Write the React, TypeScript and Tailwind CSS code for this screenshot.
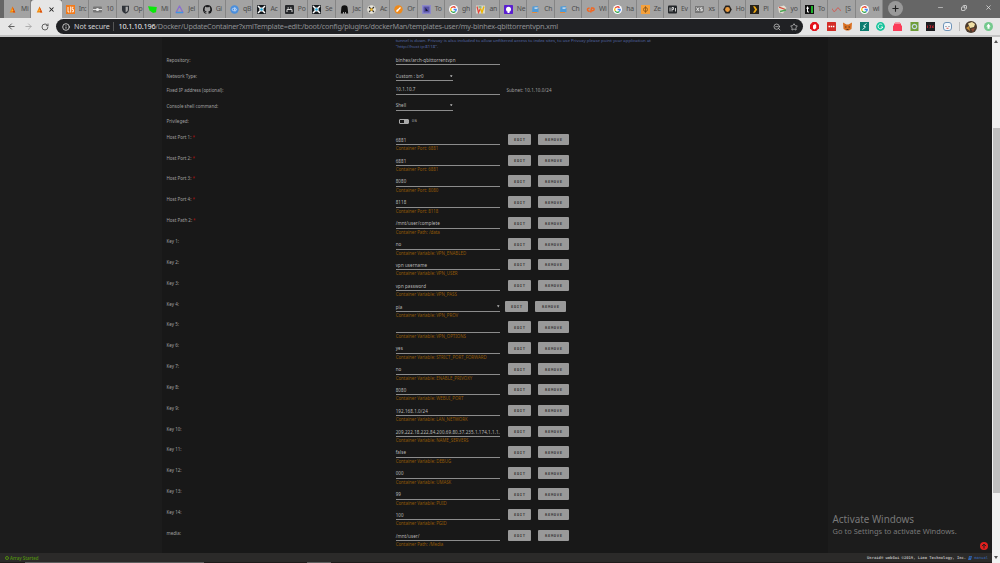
import type { ReactNode } from "react";
import { ArrowLeft, ArrowRight, RotateCw, Info, ZoomOut, Star, Plus, Minus, Copy, X } from "lucide-react";

type Tab = { title: string; icon: ReactNode; active?: boolean };

type Field = {
  label: string;
  value: string;
  hint: string;
  required?: boolean;
  select?: boolean;
};

const flame = (
  <svg viewBox="0 0 9 9" className="size-full">
    <path d="M4.5 1.500 7.300 7.500H1.700z" fill="#f28a12" />
    <path d="M4.5 1.500 7.300 7.500H5.2z" fill="#d9480f" />
    <path d="M3.300 6h2.400L4.5 4.200z" fill="#ffb52e" />
  </svg>
);

const google = (
  <svg viewBox="0 0 9 9" className="size-full">
    <circle cx="4.5" cy="4.5" r="4.5" fill="#fff" />
    <g fill="none" strokeWidth="1.3">
      <path d="M2.2 3A2.7 2.7 0 0 1 6.5 2.7" stroke="#ea4335" />
      <path d="M2.2 3a2.7 2.7 0 0 0 0 3" stroke="#fbbc05" />
      <path d="M2.2 6a2.7 2.7 0 0 0 4.2.5" stroke="#34a853" />
      <path d="M6.4 6.5a2.7 2.7 0 0 0 .8-2H4.6" stroke="#4285f4" />
    </g>
  </svg>
);

const crosshair = (
  <svg viewBox="0 0 9 9" className="size-full">
    <rect width="9" height="9" rx="1" fill="#15191d" />
    <path d="M1 1l7 7M8 1 1 8" stroke="#fff" strokeWidth="1.5" />
    <circle cx="4.5" cy="4.5" r="2.1" fill="#fff" />
    <circle cx="4.5" cy="4.5" r="1.3" fill="#22a7d8" />
  </svg>
);

const forum = (
  <svg viewBox="0 0 9 9" className="size-full">
    <path d="M1.5 1.5 7.500 1 5.8 3H7.500v4L1 7.500z" fill="#4f9bd8" />
    <path d="M3.5 2.5h3v1.2h-3z" fill="#e8eef5" />
    <path d="M1 7.500h5" stroke="#e58b3c" />
  </svg>
);

const tabs: Tab[] = [
  { title: "Mi", icon: flame },
  { title: "", icon: flame, active: true },
  {
    title: "In:",
    icon: (
      <svg viewBox="0 0 9 9" className="size-full">
        <rect width="9" height="9" fill="#f27a1a" />
        <path d="M2 2v5h1.4M4.7 1.5v6M7.4 2.3H6.2v2.2h1.2v2.3H6" stroke="#fff" strokeWidth=".9" fill="none" />
      </svg>
    ),
  },
  {
    title: "10",
    icon: (
      <svg viewBox="0 0 9 9" className="size-full">
        <rect y="1.5" width="9" height="6" rx="1" fill="#777" />
        <path d="M0 4.5h9" stroke="#ddd" />
        <circle cx="4.5" cy="4.5" r="1.6" fill="#eee" />
      </svg>
    ),
  },
  {
    title: "Op",
    icon: (
      <svg viewBox="0 0 9 9" className="size-full">
        <path d="M1 .7h7v4c0 2-1.7 3.2-3.5 4C2.700 7.900 1 6.700 1 4.700z" fill="#30343a" />
        <path d="M4.600 1.800h2.300v3c0 1-1 1.900-2.300 2.500z" fill="#aaa" />
      </svg>
    ),
  },
  {
    title: "Mi",
    icon: (
      <svg viewBox="0 0 9 9" className="size-full">
        <path d="M0 1.300 8.800 2 8 7.300 5 8 1.600 5.500z" fill="#0ae80a" />
      </svg>
    ),
  },
  {
    title: "Jel",
    icon: (
      <svg viewBox="0 0 9 9" className="size-full" fill="none" strokeWidth="1.300">
        <path d="M4.500 1 1 7.500h7z" stroke="#8a6fd0" strokeLinejoin="round" />
        <path d="M1 7.500h7" stroke="#3d9be0" />
      </svg>
    ),
  },
  {
    title: "Gi",
    icon: (
      <svg viewBox="0 0 16 16" className="size-full">
        <path
          d="M8 0a8 8 0 0 0-2.500 15.600c.4 0 .5-.2.500-.4v-1.500c-2.200.5-2.700-1-2.700-1-.4-.9-.9-1.200-.9-1.200-.7-.5 0-.5 0-.5.8.1 1.300.9 1.300.9.700 1.200 1.900.9 2.300.7.100-.5.300-.9.500-1.100-1.800-.2-3.700-.9-3.700-4 0-.9.300-1.600.8-2.100 0-.2-.3-1 .1-2.100 0 0 .7-.2 2.200.8a7.700 7.700 0 0 1 4 0c1.500-1 2.200-.8 2.200-.8.4 1.100.2 1.900.1 2.100.5.5.8 1.200.8 2.100 0 3.100-1.900 3.800-3.700 4 .3.300.6.800.6 1.500v2.200c0 .2.100.5.600.4A8 8 0 0 0 8 0z"
          fill="#1b1b1d"
        />
      </svg>
    ),
  },
  {
    title: "qB",
    icon: (
      <svg viewBox="0 0 9 9" className="size-full">
        <circle cx="4.500" cy="4.500" r="4.200" fill="#4b8fdc" />
        <circle cx="3.500" cy="4.500" r="1.200" fill="none" stroke="#dceaff" strokeWidth=".7" />
        <path d="M4.800 2v4.500M5 3.700c2-.8 2 2.500 0 2" stroke="#dceaff" strokeWidth=".7" fill="none" />
      </svg>
    ),
  },
  { title: "Ac", icon: crosshair },
  {
    title: "Po",
    icon: (
      <svg viewBox="0 0 9 9" className="size-full">
        <rect width="9" height="9" rx="1" fill="#26282b" />
        <path d="M2 7V4.500h5V7M2.500 3h1.500M5 3h1.500" stroke="#d8d8d8" fill="none" />
      </svg>
    ),
  },
  { title: "Se", icon: crosshair },
  {
    title: "Jac",
    icon: (
      <svg viewBox="0 0 9 9" className="size-full">
        <path d="M.8 8.500 1.300 3.500a3 3 0 0 1 6.400 0l.5 5H6V7H5v1.500H4V7H3v1.500z" fill="#111" />
      </svg>
    ),
  },
  {
    title: "Ac",
    icon: (
      <svg viewBox="0 0 9 9" className="size-full">
        <circle cx="4.500" cy="4.500" r="4.300" fill="#e8e5da" />
        <path d="M2 2l5 5M7 2 2 7" stroke="#333" strokeWidth="1.100" />
        <circle cx="4.500" cy="4.500" r="1.500" fill="#e3b23a" />
      </svg>
    ),
  },
  {
    title: "Or",
    icon: (
      <svg viewBox="0 0 9 9" className="size-full">
        <circle cx="4.500" cy="4.500" r="4.200" fill="#ee8a1c" />
        <path d="M2.500 6.500 6.500 2.500" stroke="#fff" strokeWidth="1.200" />
        <circle cx="3.500" cy="5.500" r=".9" fill="#fff" />
      </svg>
    ),
  },
  {
    title: "To",
    icon: (
      <svg viewBox="0 0 9 9" className="size-full">
        <rect width="9" height="9" fill="#8d89c8" />
        <rect x="1.500" y="1.500" width="6" height="6" fill="#5652a6" />
        <path d="M3.500 2.500 6 6H3.500z" fill="#17152e" />
      </svg>
    ),
  },
  { title: "gh", icon: google },
  {
    title: "an",
    icon: (
      <svg viewBox="0 0 9 9" className="size-full">
        <rect y=".5" width="9" height="8" fill="#d9d8cf" />
        <path d="M1 1.500 2.500 7.500 4.500 3.500" stroke="#e3443a" fill="none" strokeWidth="1.200" />
        <path d="M4.500 3.500 6 7.500 8 1.500" stroke="#edb600" fill="none" strokeWidth="1.400" />
        <path d="M2.500 2h3" stroke="#3a9a57" />
      </svg>
    ),
  },
  {
    title: "Ne",
    icon: (
      <svg viewBox="0 0 9 9" className="size-full">
        <rect width="9" height="9" rx=".8" fill="#5a1fd0" />
        <circle cx="4.500" cy="4.300" r="2.500" fill="#fff" />
        <path d="M3.500 5.500h2V8h-2z" fill="#fff" />
      </svg>
    ),
  },
  { title: "Ch", icon: forum },
  { title: "Ch", icon: forum },
  {
    title: "Wi",
    icon: (
      <svg viewBox="0 0 9 9" className="size-full" fill="none" stroke="#f26722" strokeWidth="1.500">
        <path d="M3.600 3.300a1.500 1.500 0 1 0 0 2.700M4.600 7.500l1-4.500h1.200a1.300 1.300 0 0 1 0 2.700H5.500" />
      </svg>
    ),
  },
  { title: "ha", icon: google },
  {
    title: "Ze",
    icon: (
      <svg viewBox="0 0 9 9" className="size-full">
        <rect width="9" height="9" fill="#f5a13c" />
        <circle cx="4.500" cy="4.500" r="2" fill="none" stroke="#8a5413" strokeWidth=".8" />
        <path d="M4.500 1.200v6.600" stroke="#8a5413" strokeWidth=".8" />
      </svg>
    ),
  },
  {
    title: "Ev",
    icon: (
      <svg viewBox="0 0 9 9" className="size-full">
        <rect y=".5" width="9" height="8" rx="1" fill="#24272a" />
        <path d="M2 2.500v4M4 6.500v-4h1.500v2H4M7.500 3v3.500" stroke="#ddd" strokeWidth=".9" fill="none" />
      </svg>
    ),
  },
  {
    title: "xs",
    icon: (
      <svg viewBox="0 0 9 9" className="size-full">
        <path d="M0 1h9v5.500L7 8H0z" fill="#777" />
        <path d="M1.500 2.500 4 6M4 2.500 1.500 6M7.300 2.800H5.600v1.400h1.700v1.500H5.400" stroke="#eee" strokeWidth=".9" fill="none" />
      </svg>
    ),
  },
  {
    title: "Ho",
    icon: (
      <svg viewBox="0 0 9 9" className="size-full">
        <path d="M2.500.5h4L8.800 4.500l-2.300 4h-4l-2.300-4z" fill="#25211d" />
        <circle cx="4.500" cy="4.500" r="2.400" fill="#e99a3e" />
      </svg>
    ),
  },
  {
    title: "Pl",
    icon: (
      <svg viewBox="0 0 9 9" className="size-full">
        <rect width="9" height="9" fill="#26221c" />
        <path d="M3 1.200h2L7.200 4.500 5 7.800H3l2-3.300z" fill="#eba712" />
      </svg>
    ),
  },
  {
    title: "yo",
    icon: (
      <svg viewBox="0 0 9 9" className="size-full">
        <path d="M0 2 6 .5 8.500 3 5 8.500 1 7.500z" fill="#e2dfd2" />
        <path d="M1 2.200 7.500 4.500" stroke="#d94a3b" strokeWidth="1.300" />
        <path d="M2 6.500 8 5" stroke="#4da657" strokeWidth="1.300" />
      </svg>
    ),
  },
  {
    title: "To",
    icon: (
      <svg viewBox="0 0 9 9" className="size-full">
        <rect width="9" height="9" fill="#101010" />
        <path d="M6 1h2v7H6z" fill="#1fb32b" />
        <path d="M2.500 1.500v5.500h1.500M1.300 3.200H4" stroke="#fff" fill="none" />
      </svg>
    ),
  },
  {
    title: "[S",
    icon: (
      <svg viewBox="0 0 9 9" className="size-full" fill="none" stroke="#d9534a">
        <path d="M0 3.500c1.200 3.500 3.200 3.500 4 1.500s2.500-3.500 4.500.8" />
      </svg>
    ),
  },
  { title: "wi", icon: google },
];

const fields: Field[] = [
  { label: "Host Port 1:", value: "6881", hint: "Container Port: 6881", required: true },
  { label: "Host Port 2:", value: "6881", hint: "Container Port: 6881", required: true },
  { label: "Host Port 3:", value: "8080", hint: "Container Port: 8080", required: true },
  { label: "Host Port 4:", value: "8118", hint: "Container Port: 8118", required: true },
  { label: "Host Path 2:", value: "/mnt/user/complete", hint: "Container Path: /data", required: true },
  { label: "Key 1:", value: "no", hint: "Container Variable: VPN_ENABLED" },
  { label: "Key 2:", value: "vpn username", hint: "Container Variable: VPN_USER" },
  { label: "Key 3:", value: "vpn password", hint: "Container Variable: VPN_PASS" },
  { label: "Key 4:", value: "pia", hint: "Container Variable: VPN_PROV", select: true },
  { label: "Key 5:", value: "", hint: "Container Variable: VPN_OPTIONS" },
  { label: "Key 6:", value: "yes", hint: "Container Variable: STRICT_PORT_FORWARD" },
  { label: "Key 7:", value: "no", hint: "Container Variable: ENABLE_PRIVOXY" },
  { label: "Key 8:", value: "8080", hint: "Container Variable: WEBUI_PORT" },
  { label: "Key 9:", value: "192.168.1.0/24", hint: "Container Variable: LAN_NETWORK" },
  { label: "Key 10:", value: "209.222.18.222,84.200.69.80,37.235.1.174,1.1.1.", hint: "Container Variable: NAME_SERVERS" },
  { label: "Key 11:", value: "false", hint: "Container Variable: DEBUG" },
  { label: "Key 12:", value: "000", hint: "Container Variable: UMASK" },
  { label: "Key 13:", value: "99", hint: "Container Variable: PUID" },
  { label: "Key 14:", value: "100", hint: "Container Variable: PGID" },
  { label: "media:", value: "/mnt/user/", hint: "Container Path: /Media" },
];

function TabStrip() {
  return (
    <div className="flex h-[18px] bg-[#666] pl-1">
      <div className="flex w-[879px]">
        {tabs.map((tab, i) => (
          <div
            key={i}
            className={
              tab.active
                ? "flex min-w-0 flex-1 items-center rounded-t-[3px] bg-[#e6e6e6] pl-1 pr-1"
                : "flex min-w-0 flex-1 items-center border-r border-[#858585] bg-[#a3a3a3] pl-1"
            }
          >
            <span className="size-[9px] shrink-0">{tab.icon}</span>
            {tab.active ? (
              <X className="ml-[4px] size-[7px] shrink-0 text-[#222]" strokeWidth={3.5} />
            ) : (
              <span className="ml-1 whitespace-nowrap text-[6.800px] leading-[10px] tracking-[-0.200px] text-[#4c4c4c]">
                {tab.title}
              </span>
            )}
          </div>
        ))}
      </div>
      <span className="ml-[5px] mt-[1px] flex size-[15px] items-center justify-center rounded-full bg-[#999]">
        <Plus className="size-[9px] text-[#222]" strokeWidth={3} />
      </span>
      <div className="ml-auto mr-[8.500px] flex h-[15px] items-center gap-[17.500px] text-[#e4e4e4]">
        <Minus className="size-[7px]" />
        <Copy className="size-[6px] -scale-x-100" strokeWidth={3} />
        <X className="size-[7px]" strokeWidth={2.5} />
      </div>
    </div>
  );
}

function Extensions() {
  return (
    <div className="ml-[7px] flex items-center gap-[7.600px]">
      <svg viewBox="0 0 9 9" className="size-[9px]">
        <path d="M2.700 0h3.600L9 2.700v3.600L6.300 9H2.700L0 6.300V2.700z" fill="#e3131b" />
        <path d="M3 3.500v3l1.500 1L6.200 6V3L5 2z" fill="#fff" />
      </svg>
      <svg viewBox="0 0 9 9" className="size-[9px]">
        <rect width="9" height="9" rx=".6" fill="#d32d27" />
        <path d="M1.500 4.500h6" stroke="#fff" strokeWidth="1.500" strokeDasharray="1.500 .7" />
      </svg>
      <svg viewBox="0 0 9 9" className="size-[9px]">
        <path d="M0 .5 3.500 2.500h2L9 .5 8.500 7 6 8.500H3L.5 7z" fill="#d96f20" />
        <path d="M2 5h1.500M5.500 5H7M3.500 7.500h2" stroke="#4a3020" strokeWidth=".9" />
      </svg>
      <svg viewBox="0 0 9 9" className="size-[9px]">
        <rect width="9" height="9" fill="#0c7d70" />
        <path d="M6.500 1.500 3.500 4l2 1-3 2.500" stroke="#d7f5ef" fill="none" />
      </svg>
      <svg viewBox="0 0 9 9" className="size-[9px]">
        <circle cx="4.500" cy="4.500" r="4.400" fill="#15c39a" />
        <path d="M6.300 2.800a2.400 2.400 0 1 0 .5 2.200H4.800" stroke="#fff" strokeWidth=".9" fill="none" />
      </svg>
      <svg viewBox="0 0 9 9" className="size-[9px]">
        <path d="M1 1.500h7v2H9V9H0V3.500h1z" fill="#fb3b57" />
        <path d="M2 .8h5" stroke="#fb8191" />
      </svg>
      <svg viewBox="0 0 9 9" className="size-[9px]">
        <rect x=".5" width="8" height="9" fill="#6f9d38" />
        <circle cx="4.500" cy="4.500" r="2.200" fill="none" stroke="#c4d8e4" strokeWidth="1.200" />
      </svg>
      <svg viewBox="0 0 9 9" className="size-[9px]">
        <rect width="9" height="9" fill="#1c1c1f" />
        <path d="M1.500 3.500v2.500M3.500 3.500h1v2.300h-1M6 3.500l1.500 2.500M7.500 3.500 6 6" stroke="#c4242c" strokeWidth=".9" fill="none" />
      </svg>
      <svg viewBox="0 0 9 9" className="size-[9px]">
        <rect x=".5" y=".5" width="8" height="8" rx="2.500" fill="#f3f6fa" stroke="#6d93b8" />
        <circle cx="3" cy="4.500" r=".5" fill="#345" />
        <circle cx="6" cy="4.500" r=".5" fill="#345" />
        <path d="M3.500 6.300h2" stroke="#e2574c" />
      </svg>
      <span className="h-[9px] w-px bg-[#bcbcbc]" />
      <svg viewBox="0 0 12 12" className="ml-[-2.500px] size-3">
        <circle cx="6" cy="6" r="6" fill="#4b3a2c" />
        <path d="M3 2.500 7 1l3 2-1 3-4 1z" fill="#f0dfa5" />
        <path d="M1 7l3-2 1 5z" fill="#c8903b" />
        <path d="M6 8l4-1-2 4z" fill="#8f4834" />
      </svg>
      <svg viewBox="0 0 9 9" className="ml-[-1px] size-[9px]">
        <circle cx="4.500" cy="4.500" r="4.500" fill="#74c98d" />
        <path d="M4.500 1.800 6.700 4.500H5.500v2.300h-2V4.500H2.300z" fill="#fff" />
      </svg>
    </div>
  );
}

function AddressBar() {
  return (
    <div className="flex h-[19px] items-center border-b-2 border-[#c4c4c4] bg-[#e6e6e6] pl-[7px]">
      <div className="flex w-[49px] items-center gap-[8px] text-[#555]">
        <ArrowLeft className="size-[9px]" strokeWidth={2.500} />
        <ArrowRight className="size-[9px] text-[#aaa]" strokeWidth={2.500} />
        <RotateCw className="size-[8px]" strokeWidth={2.800} />
      </div>
      <div className="flex h-[15px] w-[747px] items-center rounded-full bg-[#202124] pl-[6px] pr-[5px]">
        <Info className="size-[8px] text-[#ddd]" strokeWidth={2.500} />
        <span className="ml-1 w-[35px] whitespace-nowrap text-[7.200px] tracking-[-0.080px] text-[#d4d4d4]">Not secure</span>
        <span className="ml-1 h-[9px] w-px bg-[#555]" />
        <span className="ml-[4.500px] whitespace-nowrap text-[7.300px] tracking-[-0.220px] text-[#8d8f92]">
          <span className="text-[#f1f1f1]">10.1.10.196</span>
          /Docker/UpdateContainer?xmlTemplate=edit:/boot/config/plugins/dockerMan/templates-user/my-binhex-qbittorrentvpn.xml
        </span>
        <ZoomOut className="ml-auto size-[8px] text-[#ccc]" strokeWidth={2.200} />
        <Star className="ml-[9px] size-[8px] text-[#ccc]" strokeWidth={2.200} />
      </div>
      <Extensions />
    </div>
  );
}

function Caret() {
  return (
    <svg viewBox="0 0 3 3" className="size-[2.500px] shrink-0">
      <path d="M0 .3h3L1.500 3z" fill="#bbb" />
    </svg>
  );
}

// Texto subrayado que imita los inputs de Unraid
function Underlined({ value, select, className }: { value: string; select?: boolean; className: string }) {
  return (
    <div className={`flex h-[10px] shrink-0 items-center justify-between border-b border-[#8c8c8c] text-[#b8b8b8] ${className}`}>
      <span className="whitespace-nowrap tracking-[0.080px]">{value}</span>
      {select && <Caret />}
    </div>
  );
}

function Button({ children, className }: { children: string; className: string }) {
  return (
    <button
      className={`flex h-[11.500px] shrink-0 items-center justify-center rounded-[1px] bg-[#999] pt-[1.500px] pl-[0.500px] font-['DejaVu_Sans_Mono'] text-[3.800px] leading-[6px] font-bold tracking-[0.700px] text-[#383838] ${className}`}
    >
      {children}
    </button>
  );
}

function Label({ children }: { children: ReactNode }) {
  return <div className="w-[229.200px] shrink-0 text-[#a0a0a0]">{children}</div>;
}

function FieldRow({ field }: { field: Field }) {
  return (
    <div className="flex h-[20.850px] shrink-0">
      <Label>
        <div className="flex h-[15px] items-center">
          {field.label}
          {field.required && <span className="ml-[1px] text-[#b01010]">*</span>}
        </div>
      </Label>
      <div>
        <div className="flex h-4 items-end">
          <Underlined value={field.value} select={field.select} className="w-[104.200px]" />
          <div className={field.select ? "ml-[5px] flex gap-[7px]" : "ml-[8px] flex gap-[7px]"}>
            <Button className="w-[23.500px]">EDIT</Button>
            <Button className="w-[30.500px]">REMOVE</Button>
          </div>
        </div>
        <div className="flex h-[6px] items-center text-[4.400px] whitespace-nowrap text-[#935806]">{field.hint}</div>
      </div>
    </div>
  );
}

function ContainerForm() {
  return (
    <div className="flex h-[516px] w-[666px] flex-col overflow-hidden bg-[#181818] pl-[4.500px] font-['Noto_Sans'] text-[4.500px] leading-[6px]">
      <div className="ml-[229.200px] h-[14.500px] shrink-0 whitespace-nowrap text-[4.330px] text-[#5468a6]">
        tunnel is down. Privoxy is also included to allow unfiltered access to index sites, to use Privoxy please point your application at
        <br />
        "http://host ip:8118".
      </div>
      <div className="flex h-[17px] shrink-0 items-center">
        <Label>Repository:</Label>
        <Underlined value="binhex/arch-qbittorrentvpn" className="w-[104.200px]" />
      </div>
      <div className="flex h-[15.500px] shrink-0 items-center">
        <Label>Network Type:</Label>
        <Underlined value="Custom : br0" select className="w-[57.200px]" />
      </div>
      <div className="flex h-[11px] shrink-0 items-center">
        <Label>Fixed IP address (optional):</Label>
        <Underlined value="10.1.10.7" className="w-[104.200px]" />
        <span className="ml-[6.500px] tracking-[0.100px] text-[#a0a0a0]">Subnet: 10.1.10.0/24</span>
      </div>
      <div className="flex h-[21px] shrink-0 items-center">
        <Label>Console shell command:</Label>
        <Underlined value="Shell" select className="w-[57.200px]" />
      </div>
      <div className="flex h-[10px] shrink-0 items-center">
        <Label>Privileged:</Label>
        <div className="ml-[3px] flex h-[5px] w-[10px] rounded-[1px] border border-[#aaa]">
          <span className="ml-auto w-1 bg-[#aaa]" />
        </div>
        <span className="ml-[3px] font-['DejaVu_Sans_Mono'] text-[3.800px] tracking-[0.600px] text-[#a0a0a0]">ON</span>
      </div>
      <div className="mt-[3.300px] flex flex-col">
        {fields.map((field) => (
          <FieldRow key={field.label} field={field} />
        ))}
      </div>
    </div>
  );
}

function Scrollbar() {
  return (
    <div className="flex w-2 flex-col items-center bg-[#f1f1f1]">
      <svg viewBox="0 0 4 3" className="mt-[3px] h-[3px] w-1">
        <path d="M2 0 4 3H0z" fill="#555" />
      </svg>
      <div className="mt-[85px] h-[365px] w-[7px] bg-[#c1c1c1]" />
      <svg viewBox="0 0 4 3" className="mt-auto mb-1 h-[3px] w-1">
        <path d="M0 0h4L2 3z" fill="#555" />
      </svg>
    </div>
  );
}

export default function App() {
  return (
    <div className="flex h-[563px] w-[1000px] flex-col overflow-hidden bg-[#1c1c1c] font-['Noto_Sans',sans-serif]">
      <TabStrip />
      <AddressBar />
      <div className="flex min-h-0 flex-1">
        <div className="flex w-[992px] flex-col">
          <main className="relative h-[516px] pl-[162px]">
            <ContainerForm />
            {/* Marca de agua de Windows */}
            <div className="absolute top-[476px] left-[832.500px] whitespace-nowrap text-[#797979]">
              <p className="text-[9.900px] leading-[13px]">Activate Windows</p>
              <p className="text-[7.500px] leading-[11px]">Go to Settings to activate Windows.</p>
            </div>
            <svg viewBox="0 0 8 8" className="absolute top-[505px] left-[979.500px] size-2">
              <circle cx="4" cy="4" r="4" fill="#e0201f" />
              <path d="M4 6.500V2.200M2 4.100 4 2.100 6 4.100" stroke="#1c1c1c" strokeWidth="1" fill="none" />
            </svg>
          </main>
          <footer className="flex h-[9px] items-center justify-between bg-[#2b2a29] pr-1 pl-[5px] leading-[6px]">
            <span className="flex items-center text-[4.400px] font-semibold text-[#4f8a10]">
              <svg viewBox="0 0 4 4" className="mr-[1px] size-1">
                <circle cx="2" cy="2" r="1.500" fill="none" stroke="#4f8a10" />
              </svg>
              Array Started
            </span>
            <span className="flex items-center font-['DejaVu_Sans_Mono'] text-[3.830px] font-bold text-[#b4b4b4]">
              Unraid® webGui ©2019, Lime Technology, Inc.
              <svg viewBox="0 0 4 4" className="mx-[2px] size-1">
                <path d="M1 0h3L3 4H0z" fill="#2f62ad" />
                <path d="M1.500 1.300h1.500" stroke="#2b2a29" strokeWidth=".5" />
              </svg>
              <span className="font-normal text-[#3568b8]">manual</span>
            </span>
          </footer>
          <div className="flex h-px bg-[#1f1b1a]">
            <span className="ml-[25px] w-[179px] bg-[#5e5e5e]" />
            <span className="ml-[103px] w-6 bg-[#5e5e5e]" />
          </div>
        </div>
        <Scrollbar />
      </div>
    </div>
  );
}
